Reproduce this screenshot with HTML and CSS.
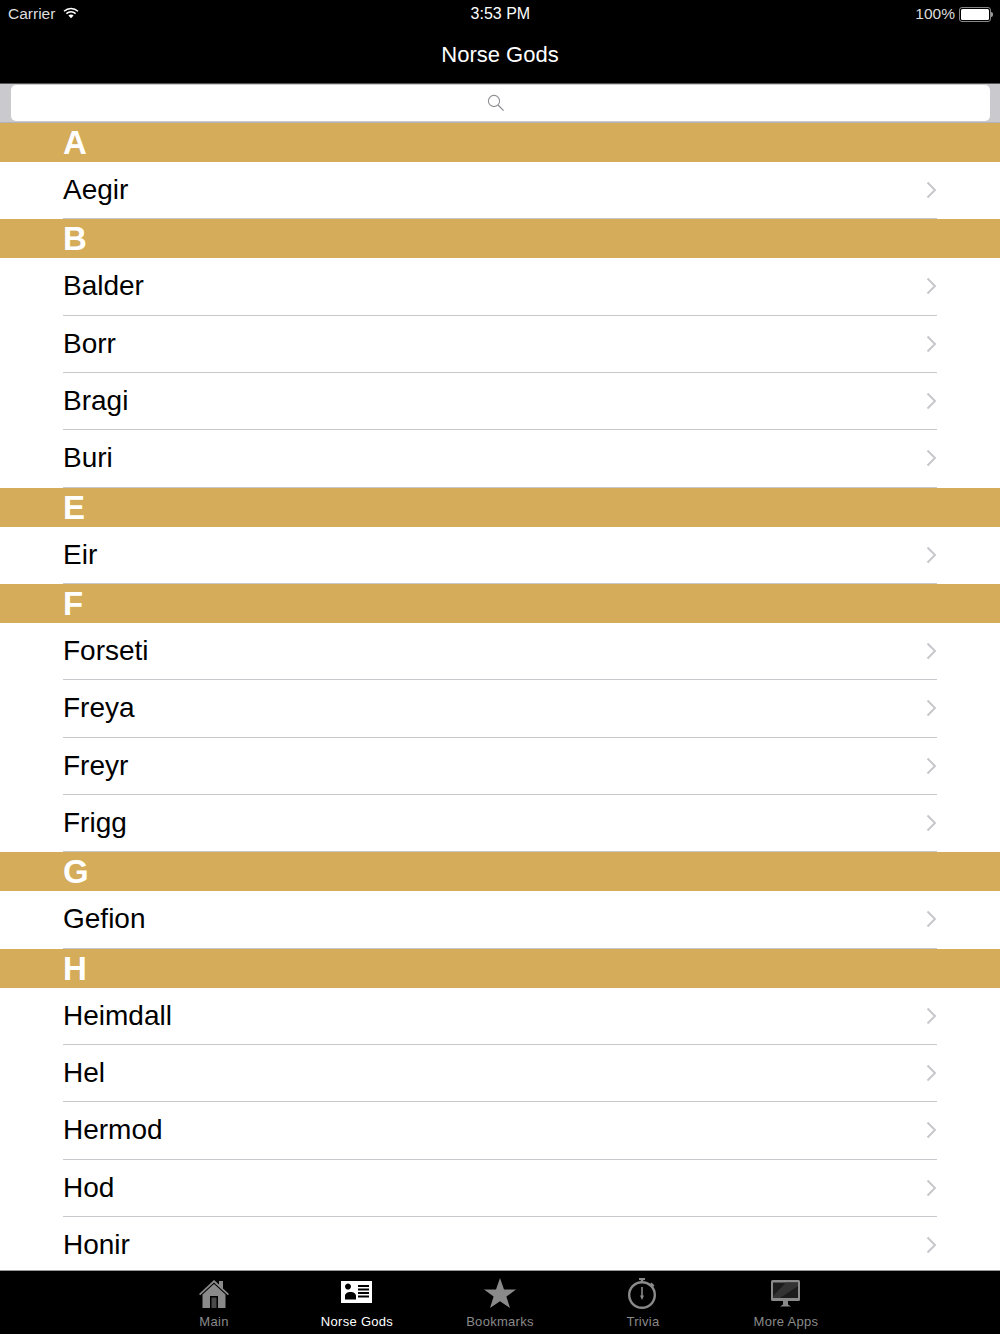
FILE: index.html
```html
<!DOCTYPE html>
<html>
<head>
  <title>Norse Gods</title>
  <link rel="stylesheet" href="styles.css">
</head>
<body>
  <div class="app">
    <div class="status-bar">
      <div class="status-left">
        <span>Carrier</span>
        <svg class="wifi" width="16" height="12" viewBox="0 0 16 12">
          <path d="M1 4.2C5 .6 11 .6 15 4.2" fill="none" stroke="#fff" stroke-width="1.5"/>
          <path d="M3.4 6.6C6 4.2 10 4.2 12.6 6.6" fill="none" stroke="#fff" stroke-width="1.5"/>
          <path d="M5.4 8.5C7 7.2 9 7.2 10.6 8.5L8 11.2Z" fill="#fff"/>
        </svg>
      </div>
      <div class="status-time">3:53 PM</div>
      <div class="status-right">
        <span>100%</span>
        <div class="battery"><div class="battery-fill"></div></div>
        <div class="battery-tip"></div>
      </div>
    </div>

    <div class="header">
      <h1>Norse Gods</h1>
    </div>

    <div class="search-bar">
      <div class="search-field">
        <svg width="18" height="18" viewBox="0 0 18 18">
          <circle cx="7" cy="7" r="5.6" fill="none" stroke="#8e8e93" stroke-width="1.1"/>
          <path d="M11 11L16.6 16.6" stroke="#8e8e93" stroke-width="1.3"/>
        </svg>
      </div>
    </div>

    <div class="list">
      <div class="section">A</div>
      <div class="row"><span>Aegir</span><svg class="chevron" width="11" height="18" viewBox="0 0 11 18"><path d="M1.5 1.5L9 9L1.5 16.5" fill="none" stroke="#c7c7cc" stroke-width="2"/></svg></div>

      <div class="section">B</div>
      <div class="row"><span>Balder</span><svg class="chevron" width="11" height="18" viewBox="0 0 11 18"><path d="M1.5 1.5L9 9L1.5 16.5" fill="none" stroke="#c7c7cc" stroke-width="2"/></svg></div>
      <div class="row"><span>Borr</span><svg class="chevron" width="11" height="18" viewBox="0 0 11 18"><path d="M1.5 1.5L9 9L1.5 16.5" fill="none" stroke="#c7c7cc" stroke-width="2"/></svg></div>
      <div class="row"><span>Bragi</span><svg class="chevron" width="11" height="18" viewBox="0 0 11 18"><path d="M1.5 1.5L9 9L1.5 16.5" fill="none" stroke="#c7c7cc" stroke-width="2"/></svg></div>
      <div class="row"><span>Buri</span><svg class="chevron" width="11" height="18" viewBox="0 0 11 18"><path d="M1.5 1.5L9 9L1.5 16.5" fill="none" stroke="#c7c7cc" stroke-width="2"/></svg></div>

      <div class="section">E</div>
      <div class="row"><span>Eir</span><svg class="chevron" width="11" height="18" viewBox="0 0 11 18"><path d="M1.5 1.5L9 9L1.5 16.5" fill="none" stroke="#c7c7cc" stroke-width="2"/></svg></div>

      <div class="section">F</div>
      <div class="row"><span>Forseti</span><svg class="chevron" width="11" height="18" viewBox="0 0 11 18"><path d="M1.5 1.5L9 9L1.5 16.5" fill="none" stroke="#c7c7cc" stroke-width="2"/></svg></div>
      <div class="row"><span>Freya</span><svg class="chevron" width="11" height="18" viewBox="0 0 11 18"><path d="M1.5 1.5L9 9L1.5 16.5" fill="none" stroke="#c7c7cc" stroke-width="2"/></svg></div>
      <div class="row"><span>Freyr</span><svg class="chevron" width="11" height="18" viewBox="0 0 11 18"><path d="M1.5 1.5L9 9L1.5 16.5" fill="none" stroke="#c7c7cc" stroke-width="2"/></svg></div>
      <div class="row"><span>Frigg</span><svg class="chevron" width="11" height="18" viewBox="0 0 11 18"><path d="M1.5 1.5L9 9L1.5 16.5" fill="none" stroke="#c7c7cc" stroke-width="2"/></svg></div>

      <div class="section">G</div>
      <div class="row"><span>Gefion</span><svg class="chevron" width="11" height="18" viewBox="0 0 11 18"><path d="M1.5 1.5L9 9L1.5 16.5" fill="none" stroke="#c7c7cc" stroke-width="2"/></svg></div>

      <div class="section">H</div>
      <div class="row"><span>Heimdall</span><svg class="chevron" width="11" height="18" viewBox="0 0 11 18"><path d="M1.5 1.5L9 9L1.5 16.5" fill="none" stroke="#c7c7cc" stroke-width="2"/></svg></div>
      <div class="row"><span>Hel</span><svg class="chevron" width="11" height="18" viewBox="0 0 11 18"><path d="M1.5 1.5L9 9L1.5 16.5" fill="none" stroke="#c7c7cc" stroke-width="2"/></svg></div>
      <div class="row"><span>Hermod</span><svg class="chevron" width="11" height="18" viewBox="0 0 11 18"><path d="M1.5 1.5L9 9L1.5 16.5" fill="none" stroke="#c7c7cc" stroke-width="2"/></svg></div>
      <div class="row"><span>Hod</span><svg class="chevron" width="11" height="18" viewBox="0 0 11 18"><path d="M1.5 1.5L9 9L1.5 16.5" fill="none" stroke="#c7c7cc" stroke-width="2"/></svg></div>
      <div class="row"><span>Honir</span><svg class="chevron" width="11" height="18" viewBox="0 0 11 18"><path d="M1.5 1.5L9 9L1.5 16.5" fill="none" stroke="#c7c7cc" stroke-width="2"/></svg></div>
    </div>

    <div class="tabbar">
      <div class="tab">
        <svg width="32" height="32" viewBox="0 0 32 32">
          <path d="M1 17L16 3L21 7.6V4H25V11.4L31 17L29.8 18.2L16 5.6L2.2 18.2Z" fill="#8a8a8a"/>
          <path fill-rule="evenodd" d="M4.5 17.5L16 7L27.5 17.5V31H4.5ZM12 19V31H20V19Z" fill="#8a8a8a"/>
          <path d="M13.5 20.5H18.5V31H13.5Z" fill="#4a4a4a"/>
        </svg>
        <span>Main</span>
      </div>
      <div class="tab active">
        <svg width="32" height="32" viewBox="0 0 32 32">
          <path fill-rule="evenodd" d="M0 4H31V26H0ZM10 9.5A3 3 0 1 0 10 9.6ZM4 22.5H15V19C15 16.5 12.5 15 9.500 15S4 16.500 4 19ZM17 8V10H28V8ZM17 11.500V13.500H28V11.500ZM17 15V17H28V15ZM17 18.500V20.500H28V18.500Z" fill="#fff"/>
        </svg>
        <span>Norse Gods</span>
      </div>
      <div class="tab">
        <svg width="34" height="32" viewBox="0 0 34 32">
          <path d="M17 1L21 12.400H33L23.400 19.600L27 31L17 24.200L7 31L10.600 19.600L1 12.400H13Z" fill="#8a8a8a"/>
        </svg>
        <span>Bookmarks</span>
      </div>
      <div class="tab">
        <svg width="32" height="32" viewBox="0 0 32 32">
          <circle cx="15" cy="18" r="12.800" fill="none" stroke="#8a8a8a" stroke-width="2.400"/>
          <path d="M12 1H18V3H16.200V5H13.800V3H12Z" fill="#8a8a8a"/>
          <path d="M24.500 5.500L27.500 8.500L26 10L23 7Z" fill="#8a8a8a"/>
          <path d="M14.200 10H15.800V18.500L17 18.500L15 23L13 18.500H14.200Z" fill="#8a8a8a"/>
        </svg>
        <span>Trivia</span>
      </div>
      <div class="tab">
        <svg width="32" height="32" viewBox="0 0 32 32">
          <rect x="1" y="3" width="29" height="21" rx="1.500" fill="#8a8a8a"/>
          <path d="M3 5.500H28V21H3Z" fill="#1c1c1c"/>
          <path d="M16 5.500H28V9L10 21H3V19Z" fill="#333"/>
          <path d="M13 24H18V27.500L21 29.500H10L13 27.500Z" fill="#8a8a8a"/>
        </svg>
        <span>More Apps</span>
      </div>
    </div>
  </div>
</body>
</html>
```

FILE: styles.css
```css
html, body {
  margin: 0;
  padding: 0;
}

body {
  font-family: "Liberation Sans", Arial, sans-serif;
  background: #000;
}

.app {
  width: 1000px;
  height: 1334px;
  display: flex;
  flex-direction: column;
  overflow: hidden;
  background: #fff;
}

.status-bar {
  height: 28px;
  background: #000;
  color: #fff;
  font-size: 15.5px;
  display: flex;
  align-items: center;
  justify-content: space-between;
  padding: 0 8px;
  position: relative;
}

.status-left,
.status-right {
  display: flex;
  align-items: center;
  color: #ddd;
}

.wifi {
  margin-left: 8px;
  margin-bottom: 2px;
}

.status-time {
  font-size: 16px;
  margin-left: 6px;
}

.battery {
  width: 28px;
  height: 11px;
  border: 1px solid #888;
  border-radius: 3px;
  padding: 1px;
  margin-left: 4px;
  box-sizing: content-box;
}

.battery-fill {
  width: 100%;
  height: 100%;
  background: #fff;
  border-radius: 1.5px;
}

.battery-tip {
  width: 2px;
  height: 5px;
  background: #999;
  margin-right: -1px;
  border-radius: 0 2px 2px 0;
}

.header {
  height: 55px;
  background: #000;
  display: flex;
  align-items: center;
  justify-content: center;
  border-bottom: 1px solid #555;
  box-sizing: content-box;
}

.header h1 {
  margin: 0 0 1px;
  font-size: 22px;
  font-weight: 500;
  color: #fff;
}

.search-bar {
  height: 39px;
  box-sizing: border-box;
  background: #c9c9ce;
  padding: 1px 10px 1px 11px;
  border-bottom: 1px solid #b4b4b8;
}

.search-field {
  height: 36px;
  background: #fff;
  border-radius: 5px;
  display: flex;
  align-items: center;
  justify-content: center;
  padding-right: 10px;
}

.list {
  flex: 1;
  overflow: hidden;
}

.section {
  height: 39px;
  line-height: 39px;
  background: #d4ac5a;
  color: #fff;
  font-size: 33px;
  font-weight: bold;
  padding-left: 63px;
}

.row {
  height: 57.33px;
  box-sizing: border-box;
  margin-left: 63px;
  margin-right: 63px;
  display: flex;
  align-items: center;
  justify-content: space-between;
  border-bottom: 1px solid #c8c7cc;
  font-size: 28px;
  color: #000;
}

.section + .row:last-child {
  border-bottom: none;
}

.chevron {
  margin-right: 0;
}

.tabbar {
  height: 64px;
  flex-shrink: 0;
  box-sizing: border-box;
  background: #000;
  border-top: 1px solid #999;
  display: flex;
  justify-content: center;
  padding-right: 0;
}

.tab {
  width: 143px;
  display: flex;
  flex-direction: column;
  align-items: center;
  padding-top: 6px;
  color: #8a8a8a;
  font-size: 13px;
  letter-spacing: 0.3px;
}

.tab svg {
  height: 32px;
  margin-bottom: 5px;
}

.tab.active {
  color: #fff;
}
```
